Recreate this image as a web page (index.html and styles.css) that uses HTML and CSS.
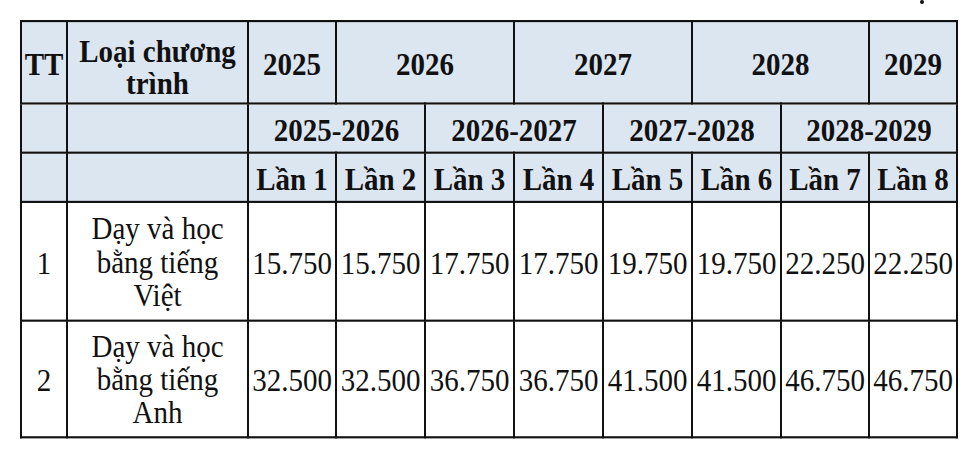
FILE: index.html
```html
<!DOCTYPE html>
<html lang="vi">
<head>
<meta charset="utf-8">
<title>Bảng học phí</title>
<link rel="stylesheet" href="styles.css">
</head>
<body>
<div class="page">
  <div class="topline"><span class="dot"></span></div>
  <table class="fees">
    <colgroup>
      <col class="c-tt">
      <col class="c-name">
      <col class="c-a">
      <col class="c-b">
      <col class="c-b">
      <col class="c-b">
      <col class="c-b">
      <col class="c-b">
      <col class="c-a">
      <col class="c-a">
    </colgroup>
    <thead>
      <tr class="r-year">
        <th>TT</th>
        <th class="two">Loại chương<br>trình</th>
        <th>2025</th>
        <th colspan="2">2026</th>
        <th colspan="2">2027</th>
        <th colspan="2">2028</th>
        <th>2029</th>
      </tr>
      <tr class="r-sub">
        <th></th>
        <th></th>
        <th colspan="2">2025-2026</th>
        <th colspan="2">2026-2027</th>
        <th colspan="2">2027-2028</th>
        <th colspan="2">2028-2029</th>
      </tr>
      <tr class="r-sub">
        <th></th>
        <th></th>
        <th>Lần 1</th>
        <th>Lần 2</th>
        <th>Lần 3</th>
        <th>Lần 4</th>
        <th>Lần 5</th>
        <th>Lần 6</th>
        <th>Lần 7</th>
        <th>Lần 8</th>
      </tr>
    </thead>
    <tbody>
      <tr class="r-data1">
        <td>1</td>
        <td class="name">Dạy và học<br>bằng tiếng<br>Việt</td>
        <td>15.750</td>
        <td>15.750</td>
        <td>17.750</td>
        <td>17.750</td>
        <td>19.750</td>
        <td>19.750</td>
        <td>22.250</td>
        <td>22.250</td>
      </tr>
      <tr class="r-data2">
        <td>2</td>
        <td class="name">Dạy và học<br>bằng tiếng<br>Anh</td>
        <td>32.500</td>
        <td>32.500</td>
        <td>36.750</td>
        <td>36.750</td>
        <td>41.500</td>
        <td>41.500</td>
        <td>46.750</td>
        <td>46.750</td>
      </tr>
    </tbody>
  </table>
</div>
</body>
</html>
```

FILE: styles.css
```css
html, body {
  margin: 0;
  padding: 0;
  background: #ffffff;
}

.page {
  width: 980px;
  height: 455px;
  overflow: hidden;
  font-family: "Liberation Serif", "Times New Roman", serif;
  color: #111111;
}

.topline {
  height: 20px;
  display: flex;
  justify-content: flex-end;
  align-items: flex-start;
  padding-right: 56px;
  box-sizing: border-box;
}

.dot {
  width: 4px;
  height: 4px;
  border-radius: 50%;
  background: #111111;
}

/* the source image is slightly stretched vertically */
.fees {
  margin-left: 20px;
  width: 938px;
  table-layout: fixed;
  border-collapse: collapse;
  font-size: 29px;
  transform: scaleY(1.07);
  transform-origin: 0 0;
}

.c-tt { width: 46px; }
.c-name { width: 181px; }
.c-a { width: 88px; }
.c-b { width: 89px; }

.fees th,
.fees td {
  border: 2px solid #111111;
  padding: 0;
  text-align: center;
  vertical-align: middle;
  white-space: nowrap;
  overflow: hidden;
}

.fees th {
  background: #dce6f1;
  font-weight: bold;
  line-height: 30px;
}

.fees td {
  background: #ffffff;
  font-weight: normal;
  line-height: 31px;
  padding-top: 4px;
}

.r-year { height: 77px; }
.r-year th { padding-top: 2px; }
.r-year th.two { padding-top: 8px; }
.r-sub { height: 46px; }
.r-sub th { padding-top: 4px; }
.r-data1 { height: 111px; }
.r-data2 { height: 109px; }
.fees td.name { padding-top: 1px; }
```
